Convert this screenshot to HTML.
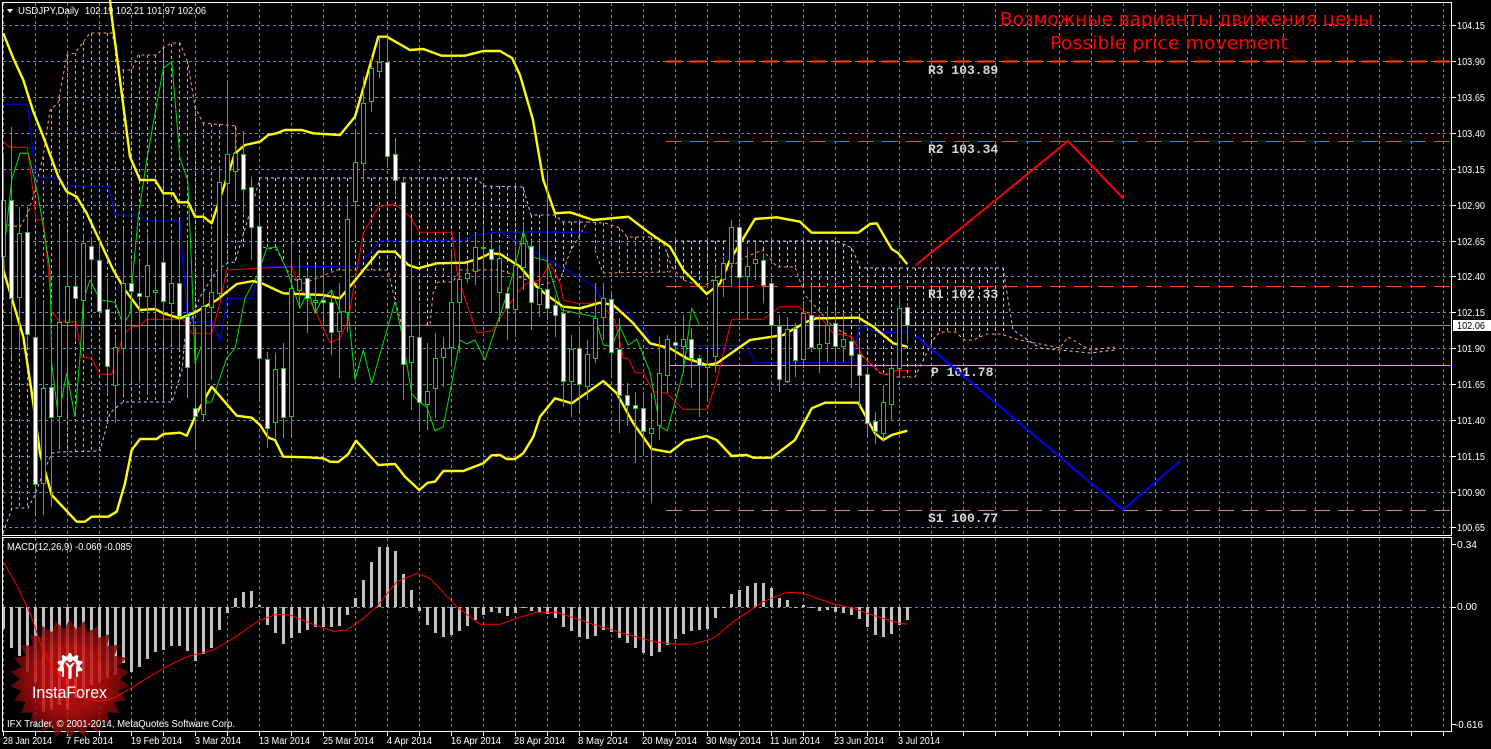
<!DOCTYPE html>
<html><head><meta charset="utf-8">
<style>
html,body{margin:0;padding:0;background:#000;width:1491px;height:749px;overflow:hidden}
svg{display:block;position:absolute;left:0;top:0}
text{font-family:"Liberation Sans",sans-serif;font-size:10px;fill:#fff}
.m{font-family:"Liberation Mono",monospace;font-size:13px;font-weight:bold;fill:#d8d8d8}
.r{font-family:"DejaVu Sans","Liberation Sans",sans-serif;font-size:18px;fill:#f00}
</style></head><body>
<svg id="s" width="1491" height="749" viewBox="0 0 1491 749" xmlns="http://www.w3.org/2000/svg">
<defs><radialGradient id="g"><stop offset="0" stop-color="#e01414"/><stop offset=".55" stop-color="#c40f0f"/><stop offset="1" stop-color="#6a0707"/></radialGradient></defs>
<rect width="1491" height="749" fill="#000003"/>
<g id="under"></g>
<g id="over"></g>
<polygon points="7,9 13,9 10,13" fill="#fff"/>
<text x="18" y="14" textLength="61" lengthAdjust="spacingAndGlyphs">USDJPY,Daily</text>
<text x="85" y="14" textLength="121" lengthAdjust="spacingAndGlyphs">102.19 102.21 101.97 102.06</text>
<text class="r" x="1000" y="25" textLength="373" lengthAdjust="spacingAndGlyphs">Возможные варианты движения цены</text>
<text class="r" x="1050" y="49" textLength="238" lengthAdjust="spacingAndGlyphs">Possible price movement</text>
<text class="m" x="928" y="74">R3 103.89</text>
<text class="m" x="928" y="153">R2 103.34</text>
<text class="m" x="928" y="298">R1 102.33</text>
<text class="m" x="931" y="376">P 101.78</text>
<text class="m" x="928" y="522">S1 100.77</text>
<polyline points="916,265 1068,141 1124,199" fill="none" stroke="#f00" stroke-width="2"/>
<polyline points="916,336 1123,510 1180,461" fill="none" stroke="#00f" stroke-width="2"/>
<g id="logo"></g>
<text x="32" y="698" style="font-size:17px" textLength="75" lengthAdjust="spacingAndGlyphs">InstaForex</text>
<g id="labels">
<text x="1457" y="29" textLength="28" lengthAdjust="spacingAndGlyphs">104.15</text>
<text x="1457" y="65" textLength="28" lengthAdjust="spacingAndGlyphs">103.90</text>
<text x="1457" y="101" textLength="28" lengthAdjust="spacingAndGlyphs">103.65</text>
<text x="1457" y="137" textLength="28" lengthAdjust="spacingAndGlyphs">103.40</text>
<text x="1457" y="173" textLength="28" lengthAdjust="spacingAndGlyphs">103.15</text>
<text x="1457" y="209" textLength="28" lengthAdjust="spacingAndGlyphs">102.90</text>
<text x="1457" y="245" textLength="28" lengthAdjust="spacingAndGlyphs">102.65</text>
<text x="1457" y="280" textLength="28" lengthAdjust="spacingAndGlyphs">102.40</text>
<text x="1457" y="316" textLength="28" lengthAdjust="spacingAndGlyphs">102.15</text>
<text x="1457" y="352" textLength="28" lengthAdjust="spacingAndGlyphs">101.90</text>
<text x="1457" y="388" textLength="28" lengthAdjust="spacingAndGlyphs">101.65</text>
<text x="1457" y="424" textLength="28" lengthAdjust="spacingAndGlyphs">101.40</text>
<text x="1457" y="460" textLength="28" lengthAdjust="spacingAndGlyphs">101.15</text>
<text x="1457" y="496" textLength="28" lengthAdjust="spacingAndGlyphs">100.90</text>
<text x="1457" y="531" textLength="28" lengthAdjust="spacingAndGlyphs">100.65</text>
<rect x="1453" y="320" width="38" height="11" fill="#fff"/>
<text x="1457" y="329" textLength="28" lengthAdjust="spacingAndGlyphs" style="fill:#000">102.06</text>
<text x="7" y="550" textLength="124" lengthAdjust="spacingAndGlyphs">MACD(12,26,9) -0.060 -0.085</text>
<text x="1457" y="548" textLength="20" lengthAdjust="spacingAndGlyphs">0.34</text>
<text x="1457" y="610" textLength="20" lengthAdjust="spacingAndGlyphs">0.00</text>
<text x="1455" y="728" textLength="28" lengthAdjust="spacingAndGlyphs">-0.616</text>
<text x="7" y="727" textLength="228" lengthAdjust="spacingAndGlyphs">IFX Trader, © 2001-2014, MetaQuotes Software Corp.</text>
<text x="3" y="744" textLength="49" lengthAdjust="spacingAndGlyphs">28 Jan 2014</text>
<text x="66" y="744" textLength="47" lengthAdjust="spacingAndGlyphs">7 Feb 2014</text>
<text x="131" y="744" textLength="51" lengthAdjust="spacingAndGlyphs">19 Feb 2014</text>
<text x="195" y="744" textLength="46" lengthAdjust="spacingAndGlyphs">3 Mar 2014</text>
<text x="259" y="744" textLength="51" lengthAdjust="spacingAndGlyphs">13 Mar 2014</text>
<text x="323" y="744" textLength="51" lengthAdjust="spacingAndGlyphs">25 Mar 2014</text>
<text x="387" y="744" textLength="45" lengthAdjust="spacingAndGlyphs">4 Apr 2014</text>
<text x="451" y="744" textLength="50" lengthAdjust="spacingAndGlyphs">16 Apr 2014</text>
<text x="514" y="744" textLength="51" lengthAdjust="spacingAndGlyphs">28 Apr 2014</text>
<text x="578" y="744" textLength="50" lengthAdjust="spacingAndGlyphs">8 May 2014</text>
<text x="642" y="744" textLength="55" lengthAdjust="spacingAndGlyphs">20 May 2014</text>
<text x="706" y="744" textLength="55" lengthAdjust="spacingAndGlyphs">30 May 2014</text>
<text x="770" y="744" textLength="50" lengthAdjust="spacingAndGlyphs">11 Jun 2014</text>
<text x="834" y="744" textLength="50" lengthAdjust="spacingAndGlyphs">23 Jun 2014</text>
<text x="898" y="744" textLength="42" lengthAdjust="spacingAndGlyphs">3 Jul 2014</text>
</g>
</svg>
<script>
(function(){
var SVGNS='http://www.w3.org/2000/svg';
function put(id,str){var t=document.createElementNS(SVGNS,'g');t.innerHTML=str;document.getElementById(id).appendChild(t);}
var u='',o='';
function L(a,b,c,d,s,da,w){return '<line x1="'+a+'" y1="'+b+'" x2="'+c+'" y2="'+d+'" stroke="'+s+'"'+(da?' stroke-dasharray="'+da+'"':'')+(w?' stroke-width="'+w+'"':'')+' shape-rendering="crispEdges"/>';}
function P(a,s,w,da){return '<polyline points="'+a.map(function(p){return p[0]+','+p[1]}).join(' ')+'" fill="none" stroke="'+s+'" stroke-width="'+w+'" stroke-linejoin="round"'+(da?' stroke-dasharray="'+da+'"':'')+'/>';}
function Z(f,ox,oy,l){var r=[];for(var i=0;i<l.length;i+=2)r.push([+(ox+l[i]/f).toFixed(1),+(oy+l[i+1]/3).toFixed(1)]);return r;}
function I(p,x){if(x<=p[0][0])return p[0][1];for(var i=1;i<p.length;i++){if(x<=p[i][0]){var t=(x-p[i-1][0])/((p[i][0]-p[i-1][0])||1);return p[i-1][1]+t*(p[i][1]-p[i-1][1]);}}return p[p.length-1][1];}
var G='#778899';
[25,61,97,133,169,205,241,276,312,348,384,420,456,492,527].forEach(function(y){u+=L(3,y+.5,1451,y+.5,G,'3 3');u+=L(1452,y+.5,1456,y+.5,'#fff');});
for(var x=3;x<=1443;x+=32){u+=L(x+.5,3,x+.5,535,G,'3 3');u+=L(x+.5,538,x+.5,731,G,'3 3');u+=L(x+.5,732,x+.5,736,'#fff');}
u+=L(3,607.5,1451,607.5,G,'3 3');
[544,607,724].forEach(function(y){u+=L(1452,y+.5,1456,y+.5,'#fff');});
/* cloud */
var SA='#f4a460',TH='#d8bfd8';
var t1=[[8,225],[20,227],[28,213],[33,197],[38,177],[43,157],[50,110],[58,103],[67,55],[75,53],[90,33],[112,33],[120,70],[132,70],[138,55],[157,55],[163,48],[172,43],[180,43],[188,63],[195,107],[203,123],[236,126],[236,160]];
var b1=[[3,533],[12,508],[28,508],[35,495],[43,473],[52,453],[60,452],[100,451],[110,413],[123,402],[172,402],[182,370],[185,337],[200,297],[217,270],[228,263],[235,262],[259,182]];
var t2=[[259,178],[476,178],[484,186],[523,187],[531,215],[555,215],[563,222],[587,222]];
var a2=[[263,247],[277,250],[287,270],[300,285],[337,270],[388,270],[395,300],[402,326],[430,325],[433,293],[438,282],[453,282],[460,270],[500,270],[540,285],[560,280],[570,252],[580,235],[587,222]];
var t3=[[587,222],[605,223],[620,228],[627,237],[652,237],[663,242],[672,267]];
var b3=[[595,250],[603,273],[670,272],[672,267]];
var t4=[[675,241],[836,241],[852,248],[860,268],[1003,268],[1013,330],[1040,348],[1090,353],[1115,350]];
var a4=[[672,267],[683,280],[703,287],[717,277],[745,257],[763,250],[777,267],[795,267],[805,295],[820,312],[833,327],[852,337],[863,357],[880,373],[897,377],[915,377],[933,340],[940,332],[955,332],[965,340],[973,340],[987,334],[1000,334],[1020,340],[1060,348],[1068,337],[1090,350],[1115,347]];
function stripes(t,b,c,x0,x1){for(var x=x0;x<=x1;x+=8){var a=I(t,x),d=I(b,x);u+=L(x+.5,Math.round(a),x+.5,Math.round(d),c,'3 3');}}
stripes(t1,b1,SA,11,235);stripes(t2,a2,TH,243,587);stripes(t3,b3,SA,595,667);stripes(t4,a4,TH,675,1003);
u+=P(t1,SA,1,'3 3')+P(b1,TH,1,'3 3')+P(t2,TH,1,'3 3')+P(a2,SA,1,'3 3')+P(t3,SA,1,'3 3')+P(b3,SA,1,'3 3')+P(t4,TH,1,'3 3')+P(a4,SA,1,'3 3');
/* levels */
u+=L(3,325.5,1451,325.5,'#8d8d8d');
u+=L(670,365.5,1451,365.5,'#e6b422');
u+=L(666,61.5,1451,61.5,'#ff4500','16 8',2);
u+=L(666,141.5,1451,141.5,'#ff4500','16 8');
u+=L(666,286.5,1451,286.5,'#ff4500','16 8');
u+=L(666,510.5,1451,510.5,'#d98a68','16 8');
/* indicators */
var blue=Z(3,0,0,[10,313,82,313,95,420,105,530,170,535,200,558,325,558,345,645,420,645,440,663,540,663,550,810,552,810]).concat(Z(3,0,270,[560,130,580,155,635,155,660,212,682,85,755,85,775,15])).concat(Z(3,0,0,[785,800,1075,800,1140,723,1400,720,1420,705,1500,695])).concat(Z(3,500,180,[262,157,285,320,310,370,385,395,410,437,430,437,455,497,740,497,765,547,1055,547,1080,433,1130,457,1222,457]));
blue.splice(blue.length-12,0,[500,232]);
var red=Z(3,0,0,[10,425,30,442,82,442,100,580,108,660,130,660,145,810]).concat(Z(3,0,270,[155,125,180,155,228,155,245,260,275,265,300,313,335,313,370,195,395,170,420,168,440,148,550,148,575,190,635,190,660,100,680,0])).concat(Z(3,0,0,[875,800])).concat(Z(3,0,270,[900,55,940,110,990,218,1020,205,1045,150,1065,30])).concat(Z(3,0,0,[1090,700,1135,620,1185,612,1230,650,1260,697,1355,697,1370,810])).concat(Z(3,0,270,[1390,70,1430,188,1475,183])).concat(Z(3,500,180,[50,340,80,310,120,300,150,250,180,310,190,360,230,370,300,370,345,420,370,535,385,535,405,578,430,578,460,635,500,640,550,688,622,688,650,600,695,418,790,418,840,380,895,380,935,410,960,410,1000,460,1055,470,1090,530,1150,585,1195,570,1222,572]));
var green=Z(3,0,0,[10,770,35,540,60,460,85,460,115,590,130,680,150,810]).concat(Z(3,0,270,[155,280,175,440,200,310,225,440,240,260,250,90,270,30,300,90,345,97,370,165,390,130,400,0])).concat(Z(3,0,0,[415,650,440,480,490,205,515,185,540,475,563,540,575,810])).concat(Z(3,0,270,[585,280,605,225,620,400,635,395,680,265,705,235,735,85,775,10])).concat(Z(3,0,0,[800,745,830,742,860,810])).concat(Z(3,0,270,[900,115,925,60,945,130,965,90,995,60,1020,125,1045,125,1065,330,1090,240,1115,340,1185,95,1205,190,1235,370,1255,395,1280,410,1305,483,1330,470,1380,210,1400,222,1425,210,1455,270])).concat(Z(3,500,180,[22,340,45,260,70,155,95,230,140,242,185,390,285,410,310,495,335,500,360,440,385,495,410,478,450,575,480,740,502,752,550,575,575,385,598,433]));
var upper=[[110,0]].concat(Z(3,0,0,[335,50,390,470,420,540,465,540,490,580,520,580,535,607,565,607,585,650,610,650,635,670,665,580,705,460,735,435,780,425,805,405,830,400,855,390,905,390,940,400,1020,405,1065,350,1135,110,1160,110,1230,150,1270,147,1325,167,1395,167,1450,153])).concat([[500,51],[512,58],[520,75],[533,120]]).concat(Z(3,500,180,[130,0,165,100,210,97,280,120,385,110,450,160,510,200,550,270,620,342,660,310,690,240,765,117,830,112,900,125,935,158,1075,158,1110,132,1130,130,1175,207,1195,220,1222,253]));
var middle=Z(3,0,0,[10,100,40,175,70,240,100,335,130,410,175,530,200,575,230,590,260,640,340,810]).concat(Z(3,0,270,[375,60,420,120,465,117,490,130,540,145,580,130,650,90,710,42,760,33,790,42,850,70,970,75,1020,85,1070,25])).concat(Z(3,0,0,[1135,755,1185,755,1225,795,1255,805,1310,790,1395,788,1440,775,1470,760])).concat(Z(3,500,180,[0,222,60,260,110,320,140,345,190,380,240,385,300,368,340,375,400,430,450,490,510,505,560,535,620,555,650,550,750,480,850,465,920,425,950,415,1075,413,1120,440,1180,490,1222,500]));
var lower=[[3,255]].concat(Z(3,0,270,[10,0,40,100,70,200,100,400,120,550,155,675,230,755,255,755,275,740,325,740,350,725,375,640,395,540,420,507,470,507,490,492,540,488,560,497,590,430,635,350,710,437,755,443,780,465,805,503,825,510,850,560,920,562,970,565,990,575,1015,576,1045,552,1068,512,1135,585,1185,582,1215,620,1258,660,1283,638,1305,635,1330,603,1390,603,1450,580,1475,556])).concat(Z(3,500,180,[0,825,20,837,45,837,70,820,100,770,120,710,165,655,215,670,310,603,350,640,400,730,455,807,510,817,555,782,620,768,650,780,695,828,740,825,760,833,815,833,885,780,935,685,975,668,1075,668,1125,760,1150,780,1175,765,1222,752]));
u+=P(blue,'#0000ff',1)+P(red,'#ff0000',1)+P(green,'#00e000',1);
/* candles: hi,lo,top,bot,white */
var C=[[155,300,200,256,0],[127,358,200,298,1],[207,348,233,297,0],[207,347,232,334,1],[300,514,337,484,1],[300,515,388,483,0],[360,507,387,417,1],[227,447,322,416,0],[233,415,286,322,0],[243,340,286,298,1],[235,348,243,300,0],[237,290,246,259,1],[240,315,260,311,1],[278,395,309,366,1],[337,423,347,385,0],[228,395,283,348,0],[260,383,283,291,1],[260,383,293,296,1],[233,395,265,296,0],[217,330,290,292,0],[217,340,262,301,1],[240,345,283,303,0],[220,350,283,316,1],[240,398,316,367,1],[330,450,408,416,1],[270,422,306,414,0],[270,380,292,307,0],[167,300,182,293,0],[80,233,154,183,0],[131,200,153,171,0],[131,213,154,189,1],[177,260,187,227,1],[213,400,226,358,1],[352,448,359,428,1],[353,438,369,422,0],[343,438,368,417,1],[240,437,288,416,0],[255,308,279,290,0],[270,333,278,298,1],[265,313,300,302,0],[270,325,300,302,1],[290,355,302,332,1],[283,378,312,331,0],[197,332,219,312,0],[130,240,162,201,0],[77,182,103,163,0],[57,112,68,101,0],[37,78,62,71,0],[37,167,62,156,1],[138,195,154,180,1],[177,400,182,364,1],[217,410,336,362,0],[303,432,337,402,1],[343,430,391,404,0],[333,418,358,388,0],[337,387,348,357,0],[250,367,302,347,0],[233,353,279,302,0],[265,283,273,278,0],[233,285,247,271,0],[227,310,247,248,0],[235,312,249,259,1],[245,322,258,292,0],[287,340,293,308,1],[247,337,265,309,0],[222,290,243,267,0],[240,330,246,302,1],[240,317,288,304,0],[170,320,289,308,1],[295,337,305,315,1],[307,407,313,381,1],[335,417,349,381,0],[330,412,348,384,1],[340,400,354,386,0],[283,363,318,358,0],[283,340,298,317,0],[293,377,299,352,1],[318,433,349,395,1],[383,426,395,405,1],[392,463,405,408,1],[392,455,408,431,1],[393,503,428,433,0],[337,440,373,425,0],[335,393,339,375,0],[327,360,342,345,1],[315,373,339,346,0],[328,388,339,358,1],[355,417,358,365,1],[348,400,365,367,0],[267,372,280,356,0],[257,297,263,279,0],[220,287,227,263,0],[223,320,227,277,1],[247,319,266,276,0],[242,280,259,263,0],[253,303,260,285,1],[278,352,283,325,1],[315,392,326,379,1],[317,383,329,381,0],[323,377,328,360,1],[301,368,313,359,0],[285,352,315,347,1],[315,373,344,348,0],[306,362,325,343,0],[312,362,323,346,1],[312,362,339,346,0],[337,388,341,355,1],[340,408,354,375,1],[367,436,374,423,1],[412,444,421,431,1],[385,442,402,433,0],[358,420,368,404,0],[297,378,308,368,0],[303,343,307,325,1]];
C.forEach(function(c,k){var x=3+8*k;o+=L(x+.5,c[0],x+.5,c[1],'#00e000');var h=Math.max(c[3]-c[2],1);o+='<rect x="'+(x-1.5)+'" y="'+(c[2]+.5)+'" width="4" height="'+h+'" fill="'+(c[4]?'#fff':'#000')+'" stroke="#00e000" shape-rendering="crispEdges"/>';});
/* macd bars */
var B=[282,338,362,410,440,530,525,510,525,490,480,450,440,430,420,385,410,395,372,350,345,332,332,347,377,358,338,285,234,190,172,168,210,270,293,327,308,293,285,275,275,275,272,240,190,135,82,37,37,48,118,165,227,270,293,305,300,287,272,255,240,230,235,243,234,220,228,232,238,248,275,288,305,311,302,285,290,308,323,338,353,362,350,330,313,297,288,285,282,249,215,178,165,153,145,145,158,190,195,215,210,220,227,225,232,234,240,252,276,300,305,297,270,255];
B.forEach(function(z,k){var x=3+8*k,y=Math.round(535+z/3),a=Math.min(y,607),h=Math.abs(y-607)||1;u+='<rect x="'+(x-1)+'" y="'+a+'" width="3" height="'+h+'" fill="#c0c0c0" shape-rendering="crispEdges"/>';});
var sig=Z(3,0,535,[10,80,50,150,90,235,120,320,155,395,200,450,250,490,300,500,340,490,395,458,490,400,560,365,640,345,700,310,780,255,830,238,870,240,950,272,1000,289,1040,285,1090,250,1130,215,1190,140,1250,115,1290,130,1370,215,1440,268,1500,268]).concat(Z(3,500,535,[50,250,110,232,170,232,280,268,380,298,470,322,530,328,580,327,640,310,700,260,790,200,860,172,910,175,1000,207,1060,220,1110,238,1200,265,1222,268]));
var sigS=P(sig,'#ff0000',1);
/* frame */
var fr='<rect x="2.5" y="2.5" width="1449" height="533" fill="none" stroke="#fff" shape-rendering="crispEdges"/><rect x="2.5" y="537.5" width="1449" height="194" fill="none" stroke="#fff" shape-rendering="crispEdges"/>';
put('under',u);
put('over',P(upper,'#ffff00',2.4)+P(middle,'#ffff00',2.4)+P(lower,'#ffff00',2.4)+o+fr);
/* logo */
var cx=70,cy=679,n=26,pts=[];for(var i=0;i<n*2;i++){var r=i%2?50:60,a=i*Math.PI/n;pts.push((cx+r*Math.sin(a)).toFixed(1)+','+(cy-r*Math.cos(a)).toFixed(1));}
var gx=70,gy=666,gp=[],t=10;for(var j=0;j<t*4;j++){var q=(j%4<2)?13:10,ab=(j-.5)*Math.PI*2/(t*4);gp.push((gx+q*Math.sin(ab)).toFixed(1)+','+(gy-q*Math.cos(ab)).toFixed(1));}
put('logo','<polygon points="'+pts.join(' ')+'" fill="url(#g)" opacity=".82"/><polygon points="'+gp.join(' ')+'" fill="#fff"/><circle cx="70" cy="666" r="6.5" fill="#c81010"/><path d="M64 668h12v10H64z" fill="#c81010"/><circle cx="70" cy="659.5" r="2.6" fill="#fff"/><path d="M65 663L68.4 667.5V678H71.6V667.5L75 663L73 662.5L70 665.5L67 662.5Z" fill="#fff"/>'+sigS);
})();
</script>
</body></html>
